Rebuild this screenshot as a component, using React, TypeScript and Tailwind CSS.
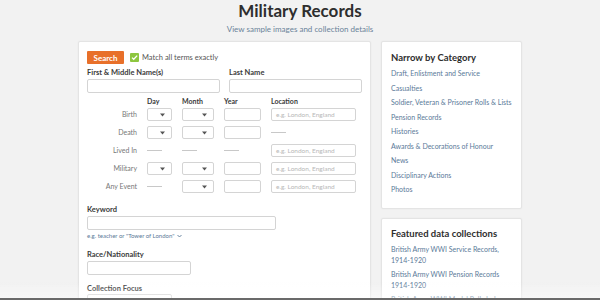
import React from "react";

const font = { fontFamily: "Lato, 'Noto Sans', sans-serif" };

const Caret = () => (
  <svg width="5" height="4" viewBox="0 0 5 4" className="shrink-0">
    <path d="M0 0.5h5L2.5 3.5z" fill="#555" />
  </svg>
);

const Select = ({ w }: { w: string }) => (
  <div
    className={`h-[13px] ${w} border border-[#d4d4d4] rounded-[2px] bg-white flex items-center justify-end pr-[6px]`}
  >
    <Caret />
  </div>
);

const Input = ({ w, placeholder }: { w: string; placeholder?: string }) => (
  <div
    className={`h-[13px] ${w} border border-[#d4d4d4] rounded-[2px] bg-white flex items-center pl-[4px] text-[6.5px] text-[#b8b8b8] whitespace-nowrap overflow-hidden`}
  >
    {placeholder}
  </div>
);

const Dash = () => <div className="h-px w-[15px] bg-[#c8c8c8]" />;

type Cell = "sel" | "input" | "loc" | "dash";

const rows: { label: string; cells: Cell[] }[] = [
  { label: "Birth", cells: ["sel", "sel", "input", "loc"] },
  { label: "Death", cells: ["sel", "sel", "input", "dash"] },
  { label: "Lived In", cells: ["dash", "dash", "dash", "loc"] },
  { label: "Military", cells: ["sel", "sel", "input", "loc"] },
  { label: "Any Event", cells: ["dash", "sel", "input", "loc"] },
];

const widths = ["w-[25px]", "w-[32px]", "w-[37px]", "w-[85px]"];

const renderCell = (c: Cell, i: number) => {
  if (c === "dash") return <Dash />;
  if (c === "sel") return <Select w={widths[i]} />;
  if (c === "loc") return <Input w={widths[i]} placeholder="e.g. London, England" />;
  return <Input w={widths[i]} />;
};

const categories = [
  "Draft, Enlistment and Service",
  "Casualties",
  "Soldier, Veteran & Prisoner Rolls & Lists",
  "Pension Records",
  "Histories",
  "Awards & Decorations of Honour",
  "News",
  "Disciplinary Actions",
  "Photos",
];

// each collection link is split where the page wraps it
const featured = [
  ["British Army WWI Service Records,", "1914-1920"],
  ["British Army WWI Pension Records", "1914-1920"],
  ["British Army WWI Medal Rolls Index", "Cards, 1914-1920"],
];

const Label = ({ children }: { children: React.ReactNode }) => (
  <div className="text-[7.5px] font-bold text-[#3a3a3a] leading-[10px]">{children}</div>
);

export default function App() {
  return (
    <div className="min-h-screen bg-[#f2f2f2] pt-[1px]" style={font}>
      <div className="text-center">
        <h1 className="text-[17px] leading-[20px] font-bold text-[#2e2e2e]">Military Records</h1>
        <div className="text-[8px] leading-[10px] mt-[3px] text-[#6a8299]">
          View sample images and collection details
        </div>
      </div>

      <div className="mx-auto w-[444px] mt-[7px] grid grid-cols-[293px_141px] gap-x-[10px] items-start">
        {/* search form */}
        <div className="bg-white border border-[#e4e4e4] rounded-[2px] shadow-[0_0_2px_rgba(0,0,0,0.05)] pt-[9px] px-[8px] pb-[20px]">
          <div className="flex items-center gap-[6px]">
            <div className="h-[13px] w-[37px] rounded-[1px] bg-[#e8702a] text-white text-[8px] font-bold flex items-center justify-center">
              Search
            </div>
            <div className="flex items-center gap-[3px]">
              <svg width="9" height="9" viewBox="0 0 9 9">
                <rect width="9" height="9" rx="1" fill="#8dc63f" />
                <path d="M2 4.6l1.7 1.7L7.2 2.6" stroke="#fff" strokeWidth="1.3" fill="none" />
              </svg>
              <span className="text-[7.5px] text-[#555]">Match all terms exactly</span>
            </div>
          </div>

          <div className="grid grid-cols-2 gap-x-[9px] mt-[4px]">
            <div>
              <Label>First &amp; Middle Name(s)</Label>
              <div className="mt-[1px] h-[14px] border border-[#d4d4d4] rounded-[2px]" />
            </div>
            <div>
              <Label>Last Name</Label>
              <div className="mt-[1px] h-[14px] border border-[#d4d4d4] rounded-[2px]" />
            </div>
          </div>

          <div className="mt-[4px] grid grid-cols-[50px_25px_32px_37px_85px] gap-x-[10px] gap-y-[5px] items-center">
            <div />
            {["Day", "Month", "Year", "Location"].map((h) => (
              <div key={h} className="text-[7px] font-bold text-[#3a3a3a] leading-[9px] -mb-[3px]">
                {h}
              </div>
            ))}
            {rows.map((r) => (
              <React.Fragment key={r.label}>
                <div className="text-right text-[7px] text-[#777] h-[13px] leading-[13px]">{r.label}</div>
                {r.cells.map((c, i) => (
                  <div key={i} className="h-[13px] flex items-center">
                    {renderCell(c, i)}
                  </div>
                ))}
              </React.Fragment>
            ))}
          </div>

          <div className="mt-[12px]">
            <Label>Keyword</Label>
            <div className="mt-[1px] h-[14px] w-[189px] border border-[#d4d4d4] rounded-[2px]" />
            <div className="mt-[1px] flex items-center gap-[2px] text-[6px] text-[#5b7a99] leading-[9px]">
              e.g. teacher or "Tower of London"
              <svg width="5" height="4" viewBox="0 0 5 4">
                <path d="M0.5 1l2 2 2-2" stroke="#5b7a99" strokeWidth="0.9" fill="none" />
              </svg>
            </div>
          </div>

          <div className="mt-[10px]">
            <Label>Race/Nationality</Label>
            <div className="mt-[1px] h-[14px] w-[104px] border border-[#d4d4d4] rounded-[2px]" />
          </div>

          <div className="mt-[9px]">
            <Label>Collection Focus</Label>
            <div className="h-[14px] w-[85px] border border-[#d4d4d4] rounded-[2px] flex items-center justify-between px-[4px] text-[7px] text-[#444]">
              All Collections
              <Caret />
            </div>
          </div>
        </div>

        {/* sidebar */}
        <div className="flex flex-col gap-[9px]">
          <div className="bg-white border border-[#e4e4e4] rounded-[2px] shadow-[0_0_2px_rgba(0,0,0,0.05)] pt-[9px] px-[9px] pb-[11px]">
            <div className="text-[9.5px] font-bold text-[#2e2e2e] leading-[13px]">Narrow by Category</div>
            <div className="mt-[2px] flex flex-col">
              {categories.map((c) => (
                <div key={c} className="text-[7px] text-[#5b7a99] leading-[14.5px] whitespace-nowrap">
                  {c}
                </div>
              ))}
            </div>
          </div>
          <div className="bg-white border border-[#e4e4e4] rounded-[2px] shadow-[0_0_2px_rgba(0,0,0,0.05)] pt-[8px] px-[9px] pb-[12px]">
            <div className="text-[9.5px] font-bold text-[#2e2e2e] leading-[13px]">Featured data collections</div>
            <div className="mt-[4px] flex flex-col gap-[3px]">
              {featured.map((f) => (
                <div key={f[0]} className="text-[7px] text-[#5b7a99] leading-[11px] whitespace-nowrap">
                  {f[0]}
                  <br />
                  {f[1]}
                </div>
              ))}
            </div>
          </div>
        </div>
      </div>

      {/* bottom fade + edge */}
      <div className="fixed inset-x-0 bottom-0 h-[18px] bg-gradient-to-t from-white/50 to-transparent pointer-events-none" />
      <div className="fixed inset-x-0 bottom-0 h-[2px] bg-[#6a6a6a] pointer-events-none" />
    </div>
  );
}
